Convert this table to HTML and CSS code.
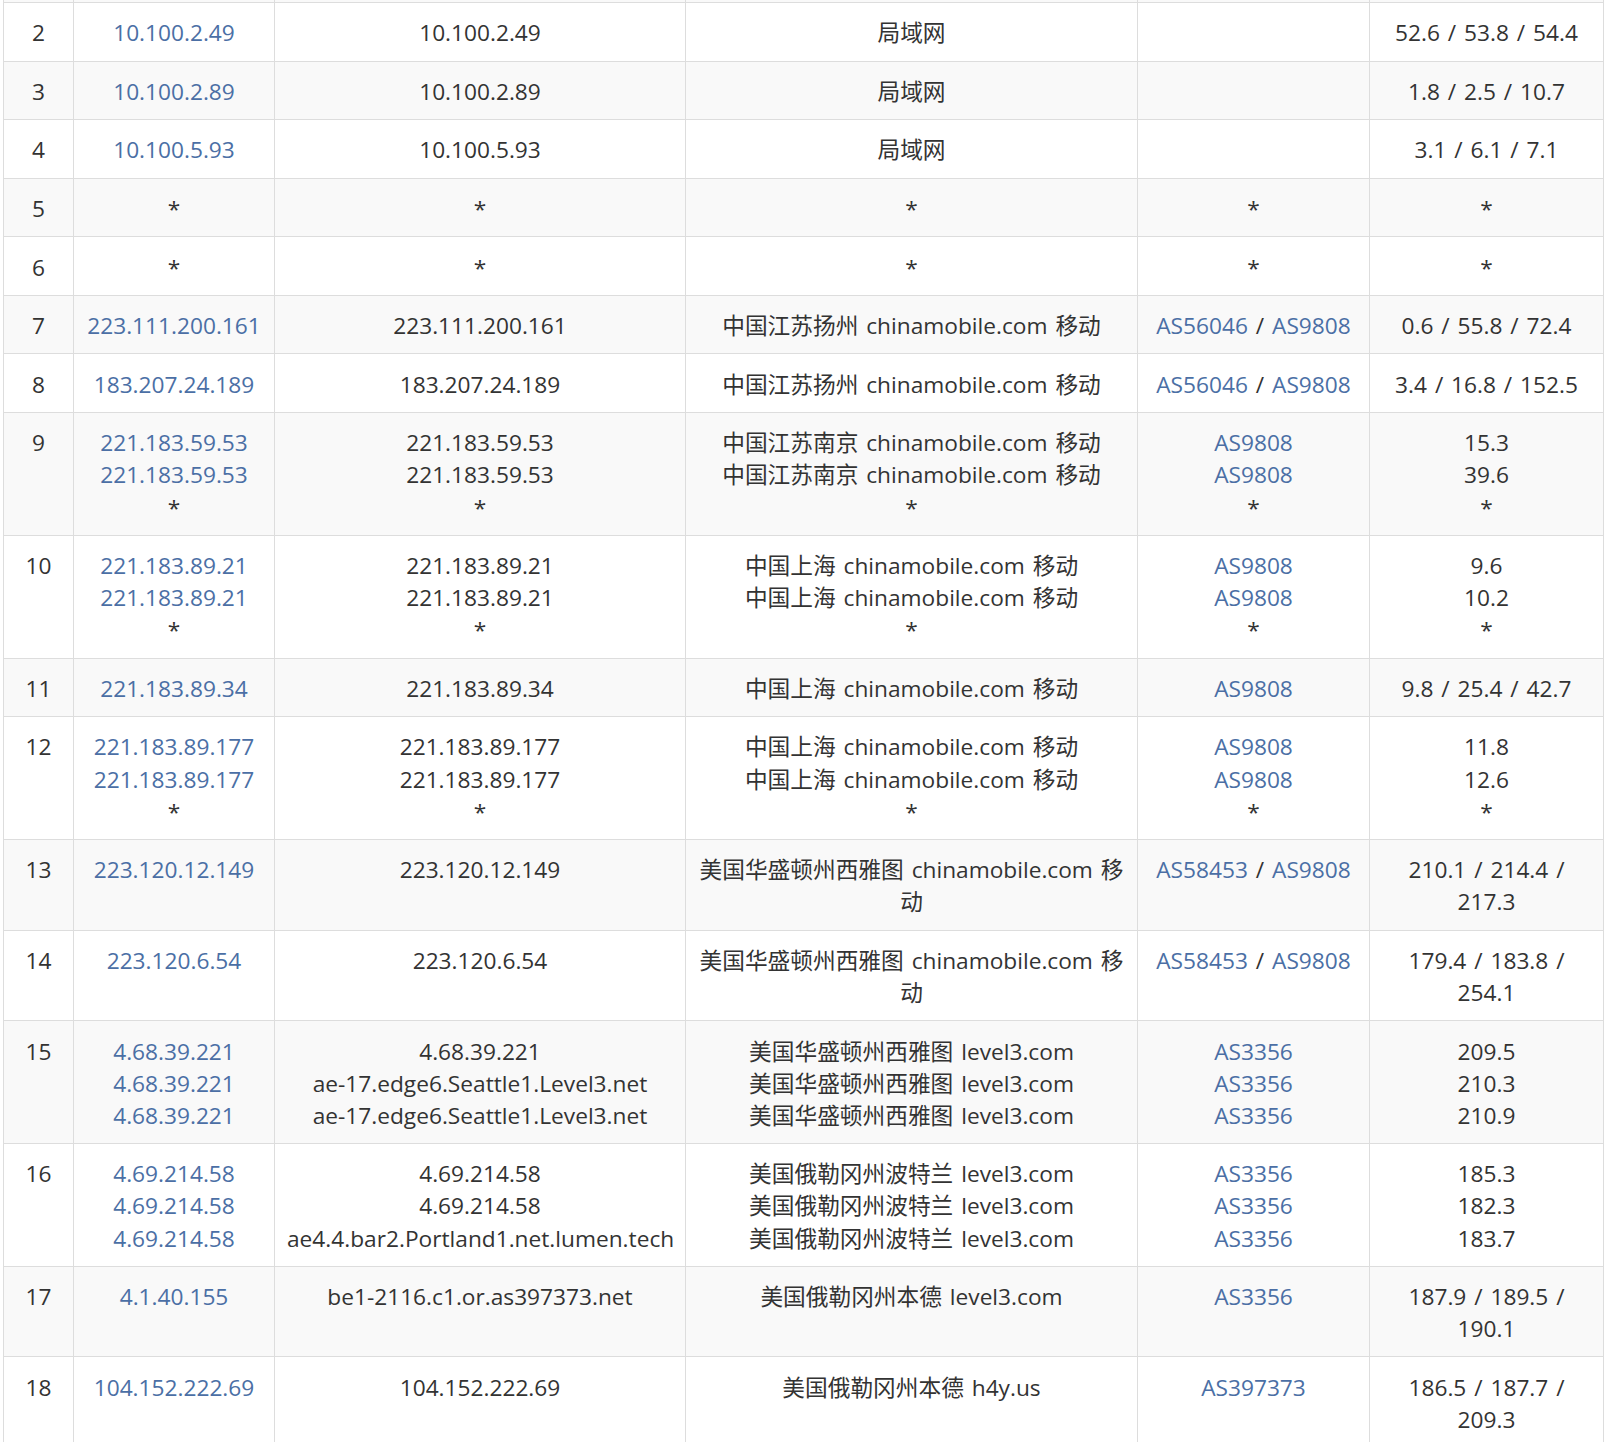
FILE: index.html
```html
<!DOCTYPE html>
<html lang="zh-CN">
<head>
<meta charset="utf-8">
<title>Traceroute</title>
<link rel="stylesheet" href="styles.css">
</head>
<body>
<div class="wrap">
<table class="trace">
<colgroup>
<col class="c-hop"><col class="c-ip"><col class="c-host"><col class="c-loc"><col class="c-as"><col class="c-rtt">
</colgroup>
<tbody>
<tr class="cut"><td></td><td></td><td></td><td></td><td></td><td></td></tr>
<tr><td>2</td><td><a href="#">10.100.2.49</a></td><td>10.100.2.49</td><td>局域网</td><td></td><td>52.6 / 53.8 / 54.4</td></tr>
<tr><td>3</td><td><a href="#">10.100.2.89</a></td><td>10.100.2.89</td><td>局域网</td><td></td><td>1.8 / 2.5 / 10.7</td></tr>
<tr><td>4</td><td><a href="#">10.100.5.93</a></td><td>10.100.5.93</td><td>局域网</td><td></td><td>3.1 / 6.1 / 7.1</td></tr>
<tr><td>5</td><td>*</td><td>*</td><td>*</td><td>*</td><td>*</td></tr>
<tr><td>6</td><td>*</td><td>*</td><td>*</td><td>*</td><td>*</td></tr>
<tr><td>7</td><td><a href="#">223.111.200.161</a></td><td>223.111.200.161</td><td>中国江苏扬州 chinamobile.com 移动</td><td><a href="#">AS56046</a> / <a href="#">AS9808</a></td><td>0.6 / 55.8 / 72.4</td></tr>
<tr><td>8</td><td><a href="#">183.207.24.189</a></td><td>183.207.24.189</td><td>中国江苏扬州 chinamobile.com 移动</td><td><a href="#">AS56046</a> / <a href="#">AS9808</a></td><td>3.4 / 16.8 / 152.5</td></tr>
<tr><td>9</td><td><a href="#">221.183.59.53</a><br><a href="#">221.183.59.53</a><br>*</td><td>221.183.59.53<br>221.183.59.53<br>*</td><td>中国江苏南京 chinamobile.com 移动<br>中国江苏南京 chinamobile.com 移动<br>*</td><td><a href="#">AS9808</a><br><a href="#">AS9808</a><br>*</td><td>15.3<br>39.6<br>*</td></tr>
<tr><td>10</td><td><a href="#">221.183.89.21</a><br><a href="#">221.183.89.21</a><br>*</td><td>221.183.89.21<br>221.183.89.21<br>*</td><td>中国上海 chinamobile.com 移动<br>中国上海 chinamobile.com 移动<br>*</td><td><a href="#">AS9808</a><br><a href="#">AS9808</a><br>*</td><td>9.6<br>10.2<br>*</td></tr>
<tr><td>11</td><td><a href="#">221.183.89.34</a></td><td>221.183.89.34</td><td>中国上海 chinamobile.com 移动</td><td><a href="#">AS9808</a></td><td>9.8 / 25.4 / 42.7</td></tr>
<tr><td>12</td><td><a href="#">221.183.89.177</a><br><a href="#">221.183.89.177</a><br>*</td><td>221.183.89.177<br>221.183.89.177<br>*</td><td>中国上海 chinamobile.com 移动<br>中国上海 chinamobile.com 移动<br>*</td><td><a href="#">AS9808</a><br><a href="#">AS9808</a><br>*</td><td>11.8<br>12.6<br>*</td></tr>
<tr><td>13</td><td><a href="#">223.120.12.149</a></td><td>223.120.12.149</td><td>美国华盛顿州西雅图 chinamobile.com 移动</td><td><a href="#">AS58453</a> / <a href="#">AS9808</a></td><td>210.1 / 214.4 / 217.3</td></tr>
<tr><td>14</td><td><a href="#">223.120.6.54</a></td><td>223.120.6.54</td><td>美国华盛顿州西雅图 chinamobile.com 移动</td><td><a href="#">AS58453</a> / <a href="#">AS9808</a></td><td>179.4 / 183.8 / 254.1</td></tr>
<tr><td>15</td><td><a href="#">4.68.39.221</a><br><a href="#">4.68.39.221</a><br><a href="#">4.68.39.221</a></td><td>4.68.39.221<br>ae-17.edge6.Seattle1.Level3.net<br>ae-17.edge6.Seattle1.Level3.net</td><td>美国华盛顿州西雅图 level3.com<br>美国华盛顿州西雅图 level3.com<br>美国华盛顿州西雅图 level3.com</td><td><a href="#">AS3356</a><br><a href="#">AS3356</a><br><a href="#">AS3356</a></td><td>209.5<br>210.3<br>210.9</td></tr>
<tr><td>16</td><td><a href="#">4.69.214.58</a><br><a href="#">4.69.214.58</a><br><a href="#">4.69.214.58</a></td><td>4.69.214.58<br>4.69.214.58<br>ae4.4.bar2.Portland1.net.lumen.tech</td><td>美国俄勒冈州波特兰 level3.com<br>美国俄勒冈州波特兰 level3.com<br>美国俄勒冈州波特兰 level3.com</td><td><a href="#">AS3356</a><br><a href="#">AS3356</a><br><a href="#">AS3356</a></td><td>185.3<br>182.3<br>183.7</td></tr>
<tr><td>17</td><td><a href="#">4.1.40.155</a></td><td>be1-2116.c1.or.as397373.net</td><td>美国俄勒冈州本德 level3.com</td><td><a href="#">AS3356</a></td><td>187.9 / 189.5 / 190.1</td></tr>
<tr><td>18</td><td><a href="#">104.152.222.69</a></td><td>104.152.222.69</td><td>美国俄勒冈州本德 h4y.us</td><td><a href="#">AS397373</a></td><td>186.5 / 187.7 / 209.3</td></tr>
</tbody>
</table>
</div>
</body>
</html>
```
FILE: styles.css
```css
html, body {
  margin: 0;
  padding: 0;
  background: #ffffff;
}
.wrap {
  padding-left: 3px;
}
.trace {
  border-collapse: collapse;
  table-layout: fixed;
  width: 1600px;
  font-family: "Open Sans", "Noto Sans CJK SC", sans-serif;
  font-size: 22.7px;
  line-height: 32.1px;
  word-spacing: 2px;
  color: #333333;
}
.c-hop { width: 70px; }
.c-ip { width: 201px; }
.c-host { width: 411px; }
.c-loc { width: 452px; }
.c-as { width: 232px; }
.c-rtt { width: 234px; }
.trace td {
  border: 1px solid #dddddd;
  padding: 14.3px 12px 11.2px;
  text-align: center;
  vertical-align: top;
  white-space: normal;
}
.trace tr:nth-child(odd) td {
  background: #f9f9f9;
}
.trace tr.cut td {
  padding: 0;
  height: 2px;
  line-height: 0;
  border-top: none;
}
.trace a {
  color: #4b6fa5;
  text-decoration: none;
}
```
